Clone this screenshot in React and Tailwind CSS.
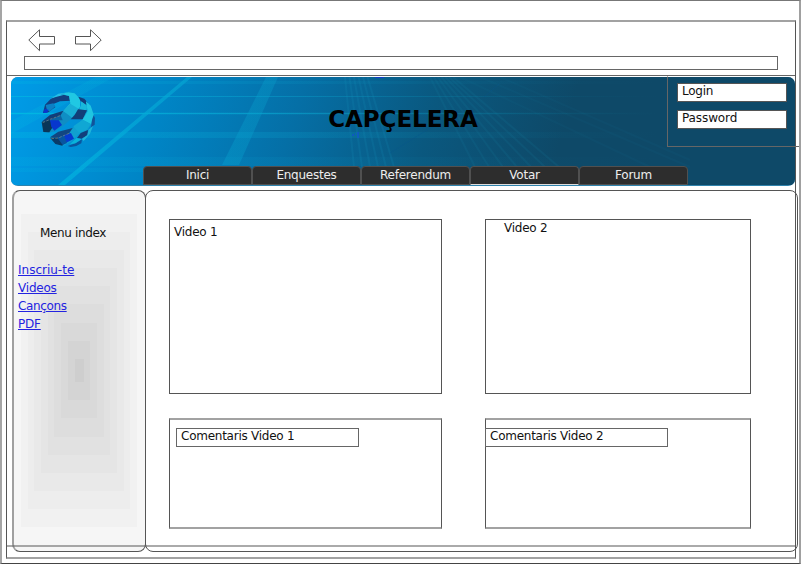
import React from "react";

const TABS = ["Inici", "Enquestes", "Referendum", "Votar", "Forum"];
const LINKS = [
  { label: "Inscriu-te", tracking: "tracking-normal" },
  { label: "Videos", tracking: "tracking-[-0.2px]" },
  { label: "Cançons", tracking: "tracking-[-0.35px]" },
  { label: "PDF", tracking: "tracking-[-0.2px]" },
];
const SHADES = ["#f1f1f1", "#ededed", "#e9e9e9", "#e5e5e5", "#e1e1e1", "#dddddd", "#d9d9d9", "#d4d4d4", "#cecece"];

function Shade({ level = 0 }) {
  const last = level === SHADES.length - 1;
  return (
    <div className={`h-full ${last ? "" : "px-[6.7px] py-[18.1px]"}`} style={{ backgroundColor: SHADES[level] }}>
      {!last && <Shade level={level + 1} />}
    </div>
  );
}

function Arrow({ flip }) {
  return (
    <svg width="27" height="23" viewBox="0 0 27 23" className={flip ? "-scale-x-100" : ""} fill="#fff" stroke="#555" strokeWidth="1">
      <path d="M.8 11 11.5 .8v6.7h15v7.5h-15v6.7Z" />
    </svg>
  );
}

function HeaderArt() {
  const fan1 = [0, 5, 10, 15, 20, 25];
  const fan2 = [0, 7, 14, 21, 28, 35, 42];
  return (
    <svg className="absolute inset-0" width="784" height="108" viewBox="11 77 784 108">
      <defs>
        <linearGradient id="sky" gradientUnits="userSpaceOnUse" x1="11" y1="77" x2="530" y2="240">
          <stop offset="0" stopColor="#009ce8" />
          <stop offset=".28" stopColor="#0085c6" />
          <stop offset=".52" stopColor="#056fa6" />
          <stop offset=".76" stopColor="#0a587f" />
          <stop offset="1" stopColor="#0e4968" />
        </linearGradient>
        <linearGradient id="ray" gradientUnits="userSpaceOnUse" x1="11" y1="0" x2="660" y2="0">
          <stop offset="0" stopColor="#00b8e4" />
          <stop offset=".4" stopColor="#08a0cc" stopOpacity=".75" />
          <stop offset="1" stopColor="#0b6a88" stopOpacity="0" />
        </linearGradient>
      </defs>
      <rect x="11" y="77" width="784" height="108" fill="url(#sky)" />
      <g fill="url(#ray)">
        <rect x="11" y="81" width="650" height="3" opacity=".25" />
        <rect x="11" y="96" width="650" height="1" opacity=".7" />
        <rect x="11" y="113" width="650" height="1" />
        <rect x="11" y="112" width="650" height="3" opacity=".2" />
        <rect x="11" y="132" width="650" height="6" opacity=".35" />
        <rect x="11" y="157" width="650" height="9" opacity=".17" />
        <rect x="11" y="168" width="650" height="4" opacity=".17" />
        <path d="M187 77h5L65 185h-7Z" opacity=".75" />
        <path d="M266 77h12L239 165h-17Z" opacity=".45" />
        <path d="M96 77h18L11 134v-13Z" opacity=".25" />
      </g>
      <g stroke="#1594bd" strokeWidth="2" opacity=".16">
        {fan1.map((d) => <path key={d} d={`M${345 + d * 0.9} 77L${354 + d * 1.6} 167`} />)}
      </g>
      <g stroke="#1686a7" strokeWidth="2" opacity=".13">
        {fan2.map((d) => <path key={d} d={`M${430 + d * 0.55} 77L${475 + d * 2} 167`} />)}
        <path d="M460 77 650 167M480 77 690 167M500 77 690 160" opacity=".5" />
      </g>
      <path d="M375 77.5h9" stroke="#133dcc" />
      <path d="M352 135h2M355 134h1M358 132v6" stroke="#1448df" />
      <g opacity=".45" stroke="#07558f" strokeDasharray="2 1">
        <path d="M390 153 440 122M484 97 499 84" />
      </g>
    </svg>
  );
}

function Globe() {
  return (
    <svg width="54.7" height="56" viewBox="123 277 164 168" className="absolute left-[30px] top-[15px]">
      <path d="M135 315 155 295 185 284 212 288 212 303 180 305 160 313 166 322 145 338 129 340Z" fill="#123f80" />
      <path d="M150 298 175 282 205 278 190 286 165 293Z" fill="#25bfe6" />
      <path d="M137 316 160 311 166 320 150 335 141 332Z" fill="#0c80c5" />
      <path d="M129 340 134 327 145 330 142 339Z" fill="#0a35ce" />
      <path d="M182 284 205 278 224 281 240 297 240 322 216 356 186 381 165 395 145 399 129 396 125 366 150 346 190 333 211 311 207 289Z" fill="#0f8ec4" />
      <path d="M185 283 205 278 224 281 240 297 240 322 216 350 190 334 211 311 207 289Z" fill="#20c8e3" />
      <path d="M190 334 211 312 237 328 216 354Z" fill="#18aed6" />
      <path d="M125 366 150 346 190 333 181 348 150 362Z" fill="#123e78" />
      <path d="M125 367 150 361 160 379 148 398 130 397Z" fill="#093658" />
      <path d="M150 361 172 355 186 376 163 393 154 382Z" fill="#0737ce" />
      <path d="M149 362 182 347 188 362 170 362Z" fill="#0b64a3" />
      <path d="M235 291 253 297 262 308 261 318 242 305Z" fill="#123f7d" />
      <path d="M242 304 262 318 259 334 238 329 243 316Z" fill="#18b8db" />
      <path d="M234 329 261 332 248 359 212 359 224 346Z" fill="#123e78" />
      <path d="M258 305 272 318 281 345 275 371 262 392 237 402 215 425 190 438 165 432 150 414 175 396 216 387 247 360 262 335Z" fill="#10a0cf" />
      <path d="M258 305 272 318 281 345 273 373 248 360 263 335Z" fill="#20c5e1" />
      <path d="M220 380 248 360 272 374 258 392 237 399Z" fill="#10a7d4" />
      <path d="M150 413 175 396 218 385 206 403 172 415Z" fill="#124681" />
      <path d="M150 414 172 414 193 428 187 438 166 433Z" fill="#093b68" />
      <path d="M190 407 213 400 222 417 199 429Z" fill="#0739cf" />
      <path d="M172 414 192 407 201 430 188 436Z" fill="#0755a1" />
      <path d="M281 347 285 355 284 375 273 383 276 361Z" fill="#12539a" />
      <path d="M242 400 264 391 262 407 244 417 231 415Z" fill="#123f7b" />
      <path d="M266 390 279 379 270 402 251 424 246 418 262 406Z" fill="#20b5d9" />
      <path d="M203 439 228 430 246 419 244 431 229 439 212 442Z" fill="#0a559e" />
      <path d="M210 434 229 415 245 418 226 431Z" fill="#0ab4d9" />
      <path d="M128 369 150 359 180 348M154 417 175 415 207 401" fill="none" stroke="#7f8d84" strokeWidth="2" strokeDasharray="8 4" />
    </svg>
  );
}

function Comment({ children, inset }) {
  return (
    <div className={`h-[111px] border-x border-y-2 border-x-[#555] border-y-[#a2a2a2] pt-2 ${inset}`}>
      <div className="h-[19px] w-[183px] border border-[#666] pl-1 leading-[14px]">{children}</div>
    </div>
  );
}

export default function App() {
  return (
    <div className="relative h-[564px] w-[801px] overflow-hidden border-y border-l-2 border-r-2 border-b-[#444] border-l-[#a5a5a5] border-r-[#a0a0a0] border-t-[#777] bg-white pl-1 pt-[19px] font-['DejaVu_Sans',Verdana,sans-serif] text-[12px] leading-[14px] tracking-[-0.25px] text-[#111]">
      <div className="relative h-[539px] w-[790px] border-x border-y-2 border-x-[#555] border-y-[#a2a2a2]">
        <div className="flex h-[54px] flex-col border-b border-[#666] pl-[17px] pt-[7px]">
          <div className="flex gap-5 pl-1"><Arrow /><Arrow flip /></div>
          <div className="mt-1 h-[14px] w-[754px] border border-[#666]" />
        </div>
        <header className="relative ml-1 mt-px flex h-[109px] w-[784px] flex-col items-center overflow-hidden rounded-[7px] bg-[#2f83ad]">
          <HeaderArt />
          <Globe />
          <h1 className="relative mt-[28px] text-[23px] font-bold leading-[28px] tracking-[-0.05px] text-black">CAPÇELERA</h1>
          <nav className="relative mb-px ml-[132px] mt-auto flex self-start text-[#eee]">
            {TABS.map((t) => (
              <div key={t} className={`h-[19px] w-[109px] rounded-t-[4px] border border-[#505050] bg-[#2d2d2d] text-center leading-[16px] ${t === "Votar" ? "border-b-[#ddd]" : ""}`}>{t}</div>
            ))}
          </nav>
        </header>
        <div className="ml-[5px] mt-1 flex h-[362px]">
          <aside className="relative w-[134px] shrink-0 rounded-[8px] border border-l-2 border-[#555] border-l-[#a0a0a0] bg-[#f6f6f6] pb-[24px] pl-[7px] pr-2 pt-[23px]">
            <Shade />
            <div className="absolute inset-0 pl-1 pt-[35px]">
              <div className="pl-[22px] tracking-[-0.35px]">Menu index</div>
              <ul className="mt-[21px] text-[#2323e0]">
                {LINKS.map((l) => <li key={l.label} className={`h-[18px] leading-[18px] underline ${l.tracking}`}>{l.label}</li>)}
              </ul>
            </div>
          </aside>
          <main className="-ml-px grid w-[653px] shrink-0 grid-cols-[273px_266px] grid-rows-[175px_111px] gap-x-[43px] gap-y-6 rounded-[8px] border border-[#555] pl-[23px] pt-7">
            <div className="border border-[#555] pl-1 pt-[5px]">Video 1</div>
            <div className="border border-[#555] pl-[18px] pt-px">Video 2</div>
            <Comment inset="pl-[6px]">Comentaris Video 1</Comment>
            <Comment inset="[&>div]:-ml-px">Comentaris Video 2</Comment>
          </main>
        </div>
        <div className="absolute bottom-[10px] left-0 h-[2px] w-full bg-[#555]/50" />
      </div>
      <form className="absolute left-[665px] top-[75px] flex h-[71px] w-[134px] flex-col gap-2 border border-r-0 border-[#666] border-t-transparent pl-[9px] pt-[6px]">
        <div className="h-[19px] w-[110px] border border-[#555] bg-white pl-1">Login</div>
        <div className="h-[19px] w-[110px] border border-[#555] bg-white pl-1 tracking-[-0.1px]">Password</div>
      </form>
    </div>
  );
}
